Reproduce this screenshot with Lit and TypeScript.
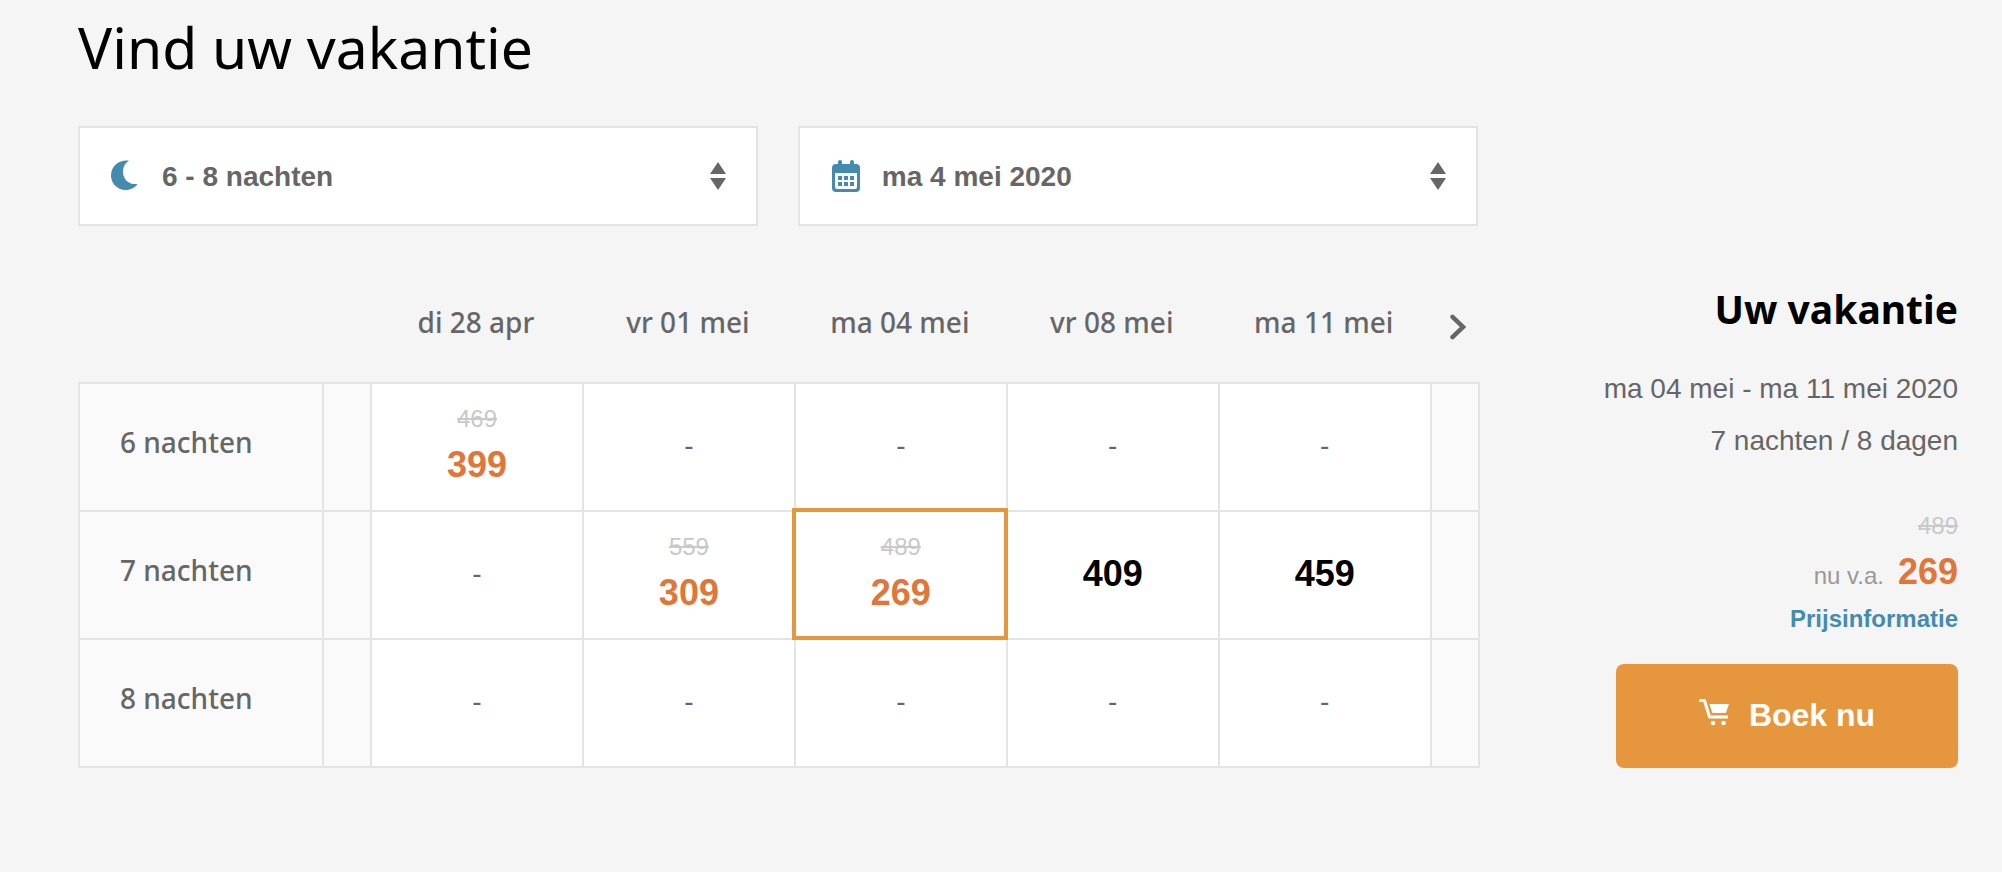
import { LitElement, html, css, nothing } from "lit";
import { customElement, state } from "lit/decorators.js";
import { classMap } from "lit/directives/class-map.js";

interface Offer {
  price: number;
  old?: number;
}

const DATES = ["di 28 apr", "vr 01 mei", "ma 04 mei", "vr 08 mei", "ma 11 mei"];

const ROWS: { label: string; offers: (Offer | null)[] }[] = [
  { label: "6 nachten", offers: [{ price: 399, old: 469 }, null, null, null, null] },
  {
    label: "7 nachten",
    offers: [null, { price: 309, old: 559 }, { price: 269, old: 489 }, { price: 409 }, { price: 459 }],
  },
  { label: "8 nachten", offers: [null, null, null, null, null] },
];

const moonIcon = html`<svg class="icon" width="28" height="32" viewBox="0 0 28 32" aria-hidden="true">
  <path fill="currentColor" d="M17 .8C10 -.8 -1 4 -1 15.500A14.500 14.500 0 0 0 13.500 30C19 30 23 27.500 25.500 24C17 25 11 19.500 11 12C11 7 13 3 17 .8Z" />
</svg>`;

const calendarIcon = html`<svg class="icon" width="28" height="32" viewBox="0 0 28 32" aria-hidden="true">
  <path
    fill="currentColor"
    fill-rule="evenodd"
    d="M6 4V2a2 2 0 0 1 4 0V4H18V2a2 2 0 0 1 4 0V4H24a4 4 0 0 1 4 4V28a4 4 0 0 1-4 4H4a4 4 0 0 1-4-4V8a4 4 0 0 1 4-4ZM3 13V27a2 2 0 0 0 2 2H23a2 2 0 0 0 2-2V13Z"
  />
  <path fill="currentColor" d="M6 16h4v4H6zM12 16h4v4h-4zM18 16h4v4h-4zM6 22h4v4H6zM12 22h4v4h-4zM18 22h4v4h-4z" />
</svg>`;

const sortIcon = html`<svg class="sort" width="16" height="28" viewBox="0 0 16 28" aria-hidden="true">
  <path fill="currentColor" d="M8 0L16 12H0ZM0 16H16L8 28Z" />
</svg>`;

const chevronIcon = html`<svg width="16" height="26" viewBox="0 0 16 26" aria-hidden="true">
  <path
    fill="none"
    stroke="currentColor"
    stroke-width="4.500"
    stroke-linecap="round"
    d="M2.500 2.800L13 13L2.500 23.200"
  />
</svg>`;

const cartIcon = html`<svg width="30" height="32" viewBox="0 0 30 32" aria-hidden="true">
  <path fill="none" stroke="currentColor" stroke-width="3" stroke-linejoin="round" d="M0 1.500H5.500L10.500 18H29" />
  <path fill="currentColor" d="M10.500 5H30L26.800 14H13.300Z" />
  <circle fill="currentColor" cx="14" cy="24" r="2.300" />
  <circle fill="currentColor" cx="24.500" cy="24" r="2.300" />
</svg>`;

@customElement("app-root")
export class AppRoot extends LitElement {
  @state() private row = 1;
  @state() private col = 2;

  static styles = css`
    :host {
      display: block;
      min-height: 100vh;
      box-sizing: border-box;
      padding: 10px 44px 40px 78px;
      background: #f5f5f5;
      color: #666;
      font: 28px/52px "Liberation Sans", Arial, sans-serif;
    }
    * {
      box-sizing: border-box;
    }
    h1,
    h2,
    p {
      margin: 0;
    }
    h1,
    h2,
    th {
      font-family: "Noto Sans", sans-serif;
    }
    h1 {
      margin-bottom: 42px;
      color: #000;
      font-size: 57px;
      line-height: 74px;
      font-weight: 400;
    }
    .layout {
      display: grid;
      grid-template-columns: minmax(0, 1fr) auto;
      column-gap: 124px;
      align-items: end;
    }
    .filters {
      display: grid;
      grid-template-columns: 1fr 1fr;
      gap: 40px;
      margin-bottom: 76px;
      padding-right: 2px;
    }
    .field {
      display: grid;
      grid-template-columns: auto 1fr auto;
      align-items: center;
    }
    .field select {
      grid-area: 1 / 1 / 2 / 4;
      appearance: none;
      width: 100%;
      height: 100px;
      margin: 0;
      padding: 2px 82px 0;
      border: 2px solid #e4e4e4;
      border-radius: 0;
      background: #fff;
      color: #666;
      font: bold 28px/40px "Liberation Sans", Arial, sans-serif;
    }
    .icon,
    .sort {
      z-index: 1;
      pointer-events: none;
    }
    .icon {
      grid-area: 1 / 1;
      margin-left: 34px;
      color: #458bb0;
      overflow: visible;
    }
    .sort {
      grid-area: 1 / 3;
      margin-right: 32px;
    }
    table {
      width: 100%;
      table-layout: fixed;
      border-spacing: 0;
      border-collapse: separate;
    }
    .label-col {
      width: 244px;
    }
    .step-col {
      width: 48px;
    }
    .step-col.next {
      width: 50px;
    }
    th {
      padding: 0;
      font-size: 28px;
      line-height: 40px;
      font-weight: 500;
    }
    thead th {
      padding: 0 0 40px;
    }
    thead td {
      padding: 12px 0 0 6px;
      vertical-align: top;
    }
    tbody th,
    tbody td {
      height: 128px;
      border: 0 solid #e4e4e4;
      border-width: 2px 0 0 2px;
    }
    tbody tr:last-child > * {
      height: 130px;
      border-bottom-width: 2px;
    }
    tbody tr > :last-child {
      border-right-width: 2px;
    }
    tbody th {
      padding: 0 0 10px 40px;
      text-align: left;
    }
    tbody th,
    .blank {
      background: #fafafa;
    }
    td {
      padding: 0;
      text-align: center;
    }
    .offer {
      position: relative;
      padding-bottom: 2px;
      background: #fff;
    }
    .selected {
      z-index: 1;
    }
    .selected::after {
      content: "";
      position: absolute;
      inset: -4px -2px -2px -4px;
      border: 4px solid #e6973e;
      pointer-events: none;
    }
    button {
      margin: 0;
      padding: 0;
      border: 0;
      background: none;
      color: inherit;
      font: inherit;
      cursor: pointer;
    }
    .pick {
      display: block;
      width: 100%;
    }
    .next-button {
      display: block;
      margin: 0 auto;
    }
    .next-button svg,
    .book svg {
      display: block;
    }
    .old {
      display: block;
      color: #c9c9c9;
      font-size: 24px;
      line-height: 38px;
    }
    .price {
      display: block;
      color: #000;
      font-size: 36px;
      line-height: 54px;
      font-weight: 700;
    }
    .deal {
      color: #e07638;
    }
    .summary {
      text-align: right;
    }
    .summary h2 {
      margin-bottom: 26px;
      color: #000;
      font-size: 39px;
      line-height: 56px;
      font-weight: 700;
    }
    .cost {
      margin-top: 40px;
    }
    .total {
      display: flex;
      justify-content: flex-end;
      align-items: baseline;
      gap: 14px;
    }
    .from {
      color: #999;
      font-size: 24px;
      line-height: 38px;
    }
    .info {
      display: block;
      margin-bottom: 25px;
      color: #458bb0;
      font-size: 24px;
      line-height: 40px;
      font-weight: 700;
      text-decoration: none;
    }
    .book {
      display: inline-flex;
      justify-content: center;
      align-items: center;
      gap: 20px;
      width: 342px;
      height: 104px;
      padding-bottom: 2px;
      border-radius: 8px;
      background: #e6973e;
      color: #fff;
      font-size: 32px;
      line-height: 40px;
      font-weight: 700;
      vertical-align: top;
    }
  `;

  private offerCell(offer: Offer | null, r: number, c: number) {
    const selected = r === this.row && c === this.col;
    return html`<td class=${classMap({ offer: true, selected })}>
      ${offer
        ? html`<button
            class="pick"
            type="button"
            aria-pressed=${selected}
            @click=${() => {
              this.row = r;
              this.col = c;
            }}
          >
            ${offer.old ? html`<s class="old">${offer.old}</s>` : nothing}
            <span class=${classMap({ price: true, deal: !!offer.old })}>${offer.price}</span>
          </button>`
        : "-"}
    </td>`;
  }

  render() {
    return html`
      <h1>Vind uw vakantie</h1>
      <div class="layout">
        <main>
          <div class="filters">
            <label class="field">
              <select aria-label="Aantal nachten">
                <option>6 - 8 nachten</option>
              </select>
              ${moonIcon} ${sortIcon}
            </label>
            <label class="field">
              <select aria-label="Vertrekdatum">
                <option>ma 4 mei 2020</option>
              </select>
              ${calendarIcon} ${sortIcon}
            </label>
          </div>
          <table>
            <colgroup>
              <col class="label-col" />
              <col class="step-col" />
              ${DATES.map(() => html`<col />`)}
              <col class="step-col next" />
            </colgroup>
            <thead>
              <tr>
                <td></td>
                <td></td>
                ${DATES.map((d) => html`<th scope="col">${d}</th>`)}
                <td>
                  <button class="next-button" type="button" aria-label="Volgende data">${chevronIcon}</button>
                </td>
              </tr>
            </thead>
            <tbody>
              ${ROWS.map(
                (row, r) => html`<tr>
                  <th scope="row">${row.label}</th>
                  <td class="blank"></td>
                  ${row.offers.map((o, c) => this.offerCell(o, r, c))}
                  <td class="blank"></td>
                </tr>`,
              )}
            </tbody>
          </table>
        </main>
        <aside class="summary">
          <h2>Uw vakantie</h2>
          <p>ma 04 mei - ma 11 mei 2020</p>
          <p>7 nachten / 8 dagen</p>
          <div class="cost">
            <s class="old">489</s>
            <div class="total"><span class="from">nu v.a.</span><span class="price deal">269</span></div>
            <a class="info" href="#prijsinformatie">Prijsinformatie</a>
          </div>
          <button class="book" type="button">${cartIcon}<span>Boek nu</span></button>
        </aside>
      </div>
    `;
  }
}
